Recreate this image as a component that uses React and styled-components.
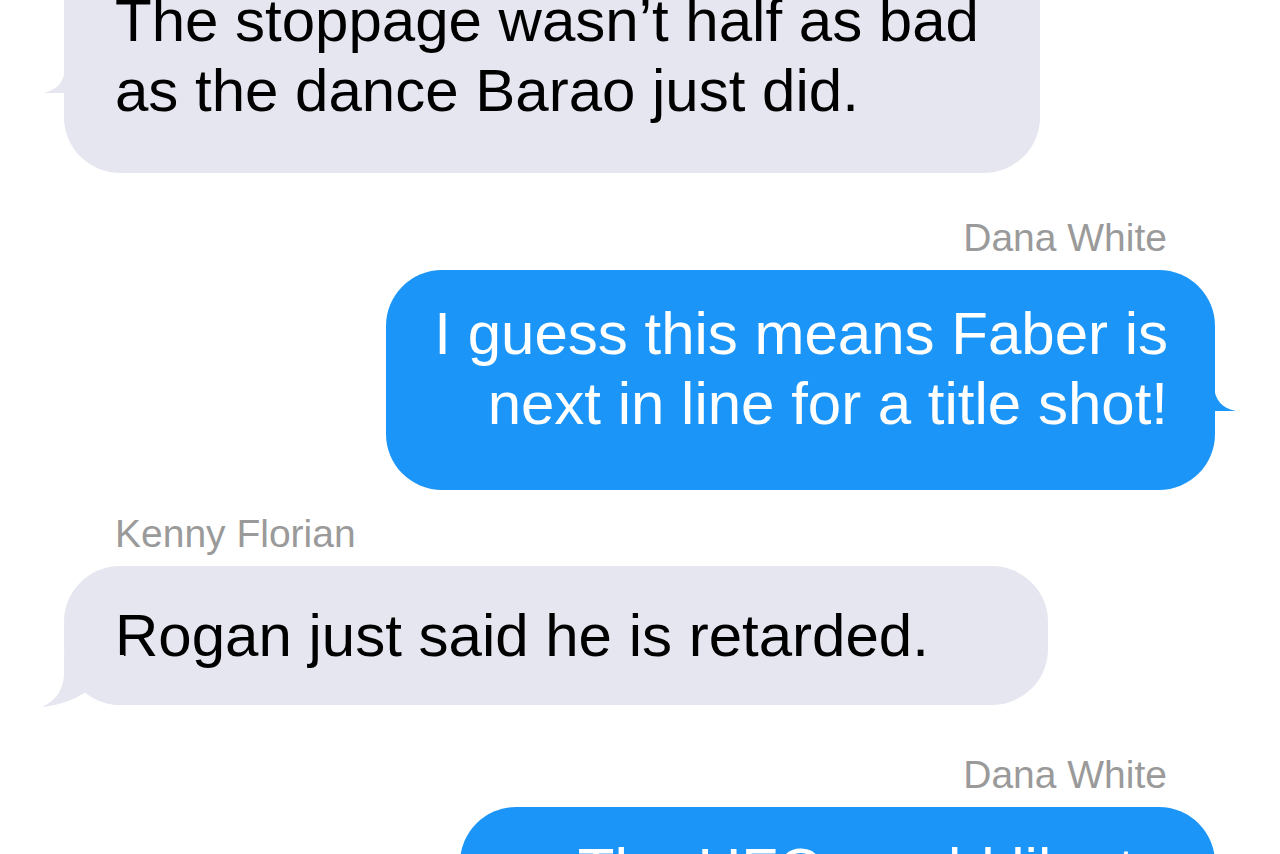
import React from "react";
import styled, { createGlobalStyle } from "styled-components";

const GlobalStyle = createGlobalStyle`
  html, body {
    margin: 0;
    padding: 0;
    background: #fff;
    height: 854px;
    overflow: hidden;
  }
  body {
    font-family: "Liberation Sans", Arial, Helvetica, sans-serif;
  }
`;

const Thread = styled.div`
  display: flex;
  flex-direction: column;
  padding: 0 65px 0 64px;
  margin-top: -61px;
`;

const Group = styled.div`
  display: flex;
  flex-direction: column;
  align-items: ${(p) => (p.$me ? "flex-end" : "flex-start")};
  margin-top: ${(p) => p.$space || 0}px;
`;

const Sender = styled.div`
  font-size: 39px;
  line-height: 46px;
  color: #9a9a9a;
  margin-bottom: 9px;
  padding: ${(p) => (p.$me ? "0 48px 0 0" : "0 0 0 51px")};
`;

const Bubble = styled.div`
  position: relative;
  box-sizing: border-box;
  width: ${(p) => p.$w}px;
  padding: ${(p) => p.$pad};
  border-radius: 56px;
  background: ${(p) => (p.$me ? "#1b95f7" : "#e5e6ef")};
  color: ${(p) => (p.$me ? "#fff" : "#000")};
  text-align: ${(p) => (p.$me ? "right" : "left")};
  font-size: 60px;
  line-height: 70px;
`;

const TailSvg = styled.svg`
  position: absolute;
  display: block;
  bottom: ${(p) => p.$bottom}px;
  ${(p) => (p.$me ? "right: -22px;" : "left: -22px;")}
`;

const Tail = ({ me, bottom, color }) => (
  <TailSvg $me={me} $bottom={bottom} width="23" height="25" viewBox="0 0 23 25">
    {me ? (
      <path d="M0 0 Q1 21 22 25 L0 25 Z" fill={color} />
    ) : (
      <path d="M23 0 Q22 21 1 25 L23 25 Z" fill={color} />
    )}
  </TailSvg>
);

const CornerTail = ({ color }) => (
  <TailSvg $bottom={-2} width="82" height="52" viewBox="0 0 82 52">
    <path
      d="M22 0 L22 20 Q21 42 0 52 Q24 50 44 37 Q58 50 82 50 L82 0 Z"
      fill={color}
    />
  </TailSvg>
);

const GRAY = "#e5e6ef";
const BLUE = "#1b95f7";

export default function App() {
  return (
    <>
      <GlobalStyle />
      <Thread>
        <Group>
          <Bubble $w={976} $pad="47px 0 47px 51px">
            The stoppage wasn’t half as bad
            <br />
            as the dance Barao just did.
            <Tail bottom={80} color={GRAY} />
          </Bubble>
        </Group>

        <Group $me $space={42}>
          <Sender $me>Dana White</Sender>
          <Bubble $me $w={829} $pad="29px 47px 51px 0">
            I guess this means Faber is
            <br />
            next in line for a title shot!
            <Tail me bottom={79} color={BLUE} />
          </Bubble>
        </Group>

        <Group $space={21}>
          <Sender>Kenny Florian</Sender>
          <Bubble $w={984} $pad="35px 0 34px 51px">
            Rogan just said he is retarded.
            <CornerTail color={GRAY} />
          </Bubble>
        </Group>

        <Group $me $space={47}>
          <Sender $me>Dana White</Sender>
          <Bubble $me $w={755} $pad="28px 47px 51px 0">
            The UFC would like to
          </Bubble>
        </Group>
      </Thread>
    </>
  );
}
